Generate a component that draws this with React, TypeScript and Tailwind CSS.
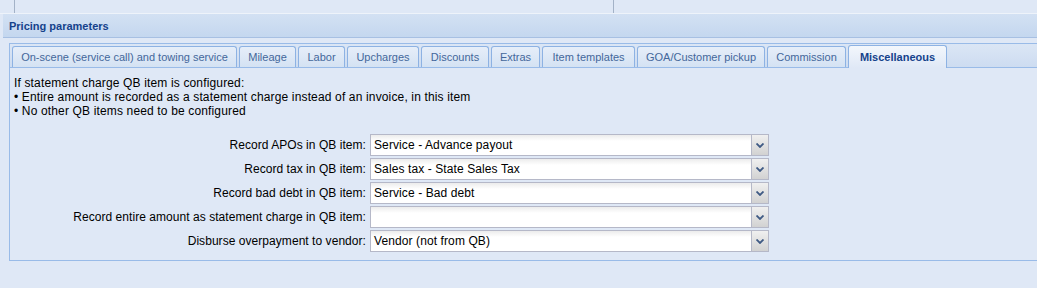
const tabs = [
  { label: 'On-scene (service call) and towing service', w: 'w-[225px]' },
  { label: 'Mileage', w: 'w-[57px]' },
  { label: 'Labor', w: 'w-[47px]' },
  { label: 'Upcharges', w: 'w-[72px]' },
  { label: 'Discounts', w: 'w-[68px]' },
  { label: 'Extras', w: 'w-[49px]' },
  { label: 'Item templates', w: 'w-[93px]' },
  { label: 'GOA/Customer pickup', w: 'w-[128px]' },
  { label: 'Commission', w: 'w-[79px]' },
  { label: 'Miscellaneous', w: 'w-[99px]' },
];

const rows = [
  { label: 'Record APOs in QB item:', value: 'Service - Advance payout' },
  { label: 'Record tax in QB item:', value: 'Sales tax - State Sales Tax' },
  { label: 'Record bad debt in QB item:', value: 'Service - Bad debt' },
  { label: 'Record entire amount as statement charge in QB item:', value: '' },
  { label: 'Disburse overpayment to vendor:', value: 'Vendor (not from QB)' },
];

function Chevron() {
  return (
    <svg width="8" height="5" viewBox="0 0 8 5">
      <path d="M0.5 0.5 L4 4 L7.5 0.5" fill="none" stroke="#3f5a84" strokeWidth="1.8" />
    </svg>
  );
}

function ComboField({ value }: { value: string }) {
  return (
    <div className="flex h-[22px] w-[399px]">
      <div className="flex-1 flex items-center border border-[#b5b8c8] bg-[linear-gradient(#ececec,#ffffff_6px)] px-[3px] text-[12px] tracking-[0.1px] text-black">
        {value}
      </div>
      <div className="w-[17px] flex items-center justify-center border border-l-0 border-[#b5b8c8] bg-[linear-gradient(#f0f0f0,#d2d2d2)]">
        <Chevron />
      </div>
    </div>
  );
}

export default function App() {
  const active = 'Miscellaneous';

  return (
    <div className="w-[1037px] h-[288px] overflow-hidden bg-[#dfe8f6] font-['Liberation_Sans',Arial,sans-serif]">
      <div className="h-[13px] flex">
        <div className="ml-[14px] w-px bg-[#a3b2c7]" />
        <div className="ml-[598px] w-px bg-[#a3b2c7]" />
      </div>
      <div className="h-px bg-[#eef3fa]" />
      <div className="ml-[3px] h-[24px] flex items-center pl-[6px] pt-[2px] border-b border-[#a7c0e3] bg-[linear-gradient(#d3e1f3,#c4d7ef)] text-[11px] font-bold text-[#15428b]">
        Pricing parameters
      </div>

      <div className="mt-[5px] ml-[9px] border-l border-b border-[#99bbe8]">
        <div className="h-[25px] flex items-end gap-[2px] pl-[2px] border-t border-b border-[#99bbe8] bg-[linear-gradient(#dbe6f5,#cddcf1)]">
          {tabs.map(t =>
            t.label === active ? (
              <div
                key={t.label}
                className={`${t.w} h-[23px] -mb-px flex items-center justify-center rounded-t-[3px] border border-b-0 border-[#8db2e3] bg-[linear-gradient(#f3f7fc,#dfe8f6)] text-[11px] font-bold text-[#15428b]`}
              >
                {t.label}
              </div>
            ) : (
              <div
                key={t.label}
                className={`${t.w} h-[21px] flex items-center justify-center rounded-t-[3px] border border-b-0 border-[#8db2e3] bg-[linear-gradient(#e6eef9,#d4e2f3)] text-[11px] text-[#44679b]`}
              >
                {t.label}
              </div>
            )
          )}
        </div>

        <div className="pt-[8px] pl-[4px] text-[12px] leading-[14px] tracking-[0.15px] text-black">
          <div>If statement charge QB item is configured:</div>
          <div>• Entire amount is recorded as a statement charge instead of an invoice, in this item</div>
          <div>• No other QB items need to be configured</div>
        </div>

        <div className="mt-[16px] pb-[8px] flex flex-col gap-[2px]">
          {rows.map(r => (
            <div key={r.label} className="flex items-center gap-[4px]">
              <div className="w-[356px] text-right text-[12px] tracking-[0.05px] text-black">{r.label}</div>
              <ComboField value={r.value} />
            </div>
          ))}
        </div>
      </div>
    </div>
  );
}
